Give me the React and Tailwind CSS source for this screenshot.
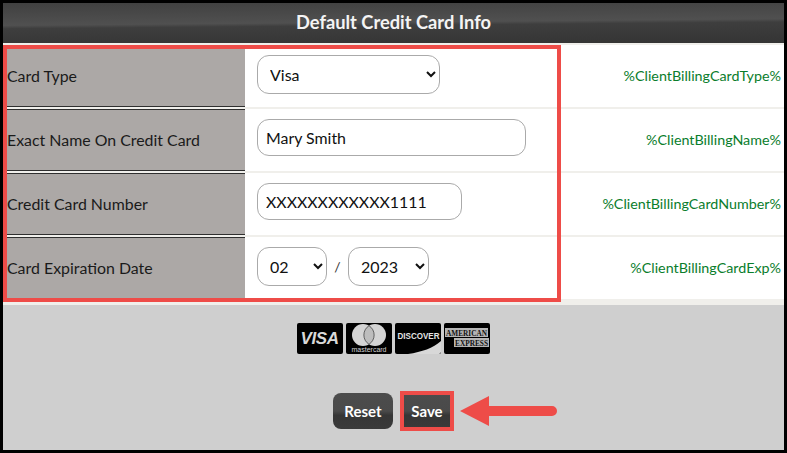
const rows = [
  { label: "Card Type", code: "%ClientBillingCardType%", kind: "type" },
  { label: "Exact Name On Credit Card", code: "%ClientBillingName%", kind: "name" },
  { label: "Credit Card Number", code: "%ClientBillingCardNumber%", kind: "number" },
  { label: "Card Expiration Date", code: "%ClientBillingCardExp%", kind: "exp" },
];

const selectClass =
  "h-[39px] rounded-xl border border-[#aaaaaa] bg-white pl-2 text-base text-[#111111] outline-none";
const inputClass =
  "mb-0.5 h-[37px] rounded-xl border border-[#aaaaaa] bg-white px-2 text-[15.9px] text-[#111111] outline-none";

function Field({ kind }) {
  if (kind === "type") {
    return (
      <select defaultValue="Visa" className={`${selectClass} w-[183px]`}>
        <option>Visa</option>
        <option>MasterCard</option>
        <option>Discover</option>
        <option>American Express</option>
      </select>
    );
  }
  if (kind === "name") {
    return <input readOnly value="Mary Smith" className={`${inputClass} w-[269px]`} />;
  }
  if (kind === "number") {
    return <input readOnly value="XXXXXXXXXXXX1111" className={`${inputClass} w-[205px]`} />;
  }
  return (
    <div className="flex items-center">
      <select defaultValue="02" className={`${selectClass} w-[70px]`}>
        <option>01</option>
        <option>02</option>
        <option>03</option>
      </select>
      <span className="w-[21px] text-center text-sm text-[#333333]">/</span>
      <select defaultValue="2023" className={`${selectClass} w-[81px]`}>
        <option>2022</option>
        <option>2023</option>
        <option>2024</option>
      </select>
    </div>
  );
}

function Row({ row }) {
  return (
    <div className="flex h-16 border-b-2 border-[#f0efeb] bg-white">
      <div className="flex w-[242px] items-center border-b border-[#2f2f2f] bg-[#aca8a6] pl-1 text-[15.9px] text-[#1a1a1a] shadow-[inset_0_1px_0_#2f2f2f]">
        {row.label}
      </div>
      <div className="mb-[3px] flex flex-1 items-center pl-3">
        <Field kind={row.kind} />
      </div>
      <div className="flex items-center pr-[3px] text-[14.3px] text-[#0a7d2c]">{row.code}</div>
    </div>
  );
}

function CardLogo({ children }) {
  return (
    <div className="relative h-[31px] w-[46px] overflow-hidden rounded-[2px] bg-black font-['Liberation_Sans',sans-serif] text-[#d8d8d8]">
      {children}
    </div>
  );
}

function CardLogos() {
  return (
    <div className="flex justify-center gap-[3px] pr-px">
      <CardLogo>
        <div className="flex h-full items-center justify-center text-[17px] font-bold italic tracking-tight">
          VISA
        </div>
      </CardLogo>
      <CardLogo>
        <svg viewBox="0 0 46 31" className="h-full w-full">
          <circle cx="17" cy="12" r="11" fill="#d4d4d4" />
          <circle cx="29" cy="12" r="11" fill="#d4d4d4" />
          <path d="M23 2.7a11 11 0 0 1 0 18.6a11 11 0 0 1 0-18.6z" fill="#bdbdbd" stroke="#333333" strokeWidth="0.7" />
          <text x="23" y="29" textAnchor="middle" fontSize="7" fill="#d4d4d4" fontFamily="Liberation Sans, sans-serif">
            mastercard
          </text>
        </svg>
      </CardLogo>
      <CardLogo>
        <svg viewBox="0 0 46 31" className="h-full w-full">
          <path d="M46 18v11a2 2 0 0 1-2 2H13C27 29 38 25 46 18z" fill="#d8d8d8" />
          <text x="23.5" y="16" textAnchor="middle" fontSize="8.4" fontWeight="700" textLength="42" lengthAdjust="spacingAndGlyphs" fill="#e4e4e4" fontFamily="Liberation Sans, sans-serif">
            DISCOVER
          </text>
        </svg>
      </CardLogo>
      <CardLogo>
        <svg viewBox="0 0 46 31" className="h-full w-full">
          <rect x="1" y="5" width="43" height="9" fill="#b5b5b5" />
          <rect x="10" y="15" width="35" height="9" fill="#b5b5b5" />
          <text x="2" y="12.5" fontSize="7.5" fontWeight="700" textLength="41" lengthAdjust="spacingAndGlyphs" fill="#111111" fontFamily="Liberation Serif, serif">
            AMERICAN
          </text>
          <text x="11" y="22.5" fontSize="7.5" fontWeight="700" textLength="33" lengthAdjust="spacingAndGlyphs" fill="#111111" fontFamily="Liberation Serif, serif">
            EXPRESS
          </text>
        </svg>
      </CardLogo>
    </div>
  );
}

const btnClass =
  "flex items-center justify-center bg-[linear-gradient(180deg,#4c4c4c_0%,#4a4a4a_50%,#363636_62%,#3a3a3a_100%)] text-[15px] font-bold text-white";

export default function App() {
  return (
    <div className="relative h-[453px] w-[787px] overflow-hidden border-[3px] border-black bg-[#cfcfcf] font-['Lato',sans-serif]">
      <div className="flex h-10 items-center justify-center bg-[linear-gradient(179.5deg,#404040_0%,#505050_48%,#3e3e3e_55%,#343434_100%)] pb-px text-[18.3px] font-bold text-[#f4f4f4]">
        Default Credit Card Info
      </div>
      <div className="h-0.5 bg-[#f0efeb]" />
      <div>
        {rows.map((row) => (
          <Row key={row.kind} row={row} />
        ))}
      </div>
      <div className="h-[4px] bg-[#f0efeb]" />

      <div className="mt-[18px]">
        <CardLogos />
      </div>

      <div className="mt-[39px] flex justify-center gap-[7px]">
        <button className={`${btnClass} h-9 w-[60px] rounded-lg`}>Reset</button>
        <button className={`${btnClass} h-9 w-[54px]`}>Save</button>
      </div>

      {/* annotations drawn over the page */}
      <div className="absolute left-0 top-[42px] h-[257px] w-[558px] border-4 border-[#ee4c48]" />
      <div className="absolute left-[397px] top-[388px] h-10 w-[54px] border-4 border-[#ee4c48]" />
      <svg viewBox="0 0 97 30" className="absolute left-[457px] top-[393px] h-[30px] w-[97px]">
        <path d="M0 15L29 0v10h63a5 5 0 0 1 0 10H29v10z" fill="#ee4c48" />
      </svg>
    </div>
  );
}
